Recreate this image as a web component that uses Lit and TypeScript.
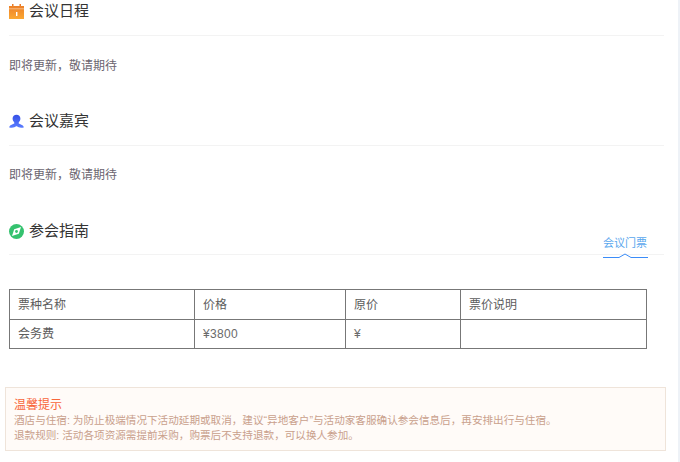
import { LitElement, html, css } from "lit";
import { customElement } from "lit/decorators.js";

@customElement("app-root")
export class AppRoot extends LitElement {
  static styles = css`
    :host {
      display: flex;
      width: 680px;
      height: 462px;
      overflow: hidden;
      background: #fff;
      font-family: "Liberation Sans", "Noto Sans CJK SC", sans-serif;
      color: #333;
      box-sizing: border-box;
    }
    .page { flex: 1; min-width: 0; padding: 0 14px 0 9px; }
    .bar { width: 2px; flex: none; background: #eef2f7; }
    .head {
      display: flex;
      align-items: center;
      gap: 5px;
      height: 20px;
      padding: 1px 0 14px;
      border-bottom: 1px solid #f3f3f3;
      font-size: 15px;
      line-height: 20px;
      color: #333;
    }
    .head svg { width: 15px; height: 15px; flex: none; }
    .soon {
      font-size: 12px;
      line-height: 18px;
      color: #6b6570;
      padding: 21px 0 0;
      height: 65px;
      box-sizing: border-box;
      margin-bottom: 9px;
    }
    .soon.second { padding-top: 20px; }
    .guide { position: relative; }
    .guide .head { padding-bottom: 13px; }
    .tab {
      position: absolute;
      right: 16px;
      top: 15px;
      width: 45px;
      font-size: 11px;
      line-height: 16px;
      color: #5aa7ee;
      text-align: left;
    }
    .tab svg { display: block; width: 45px; height: 6px; margin-top: 2px; }
    table {
      border-collapse: collapse;
      table-layout: fixed;
      width: 637px;
      margin-top: 34px;
      font-size: 12px;
      color: #5c5c5c;
    }
    td {
      border: 1px solid #777;
      padding: 0 8px;
      height: 28px;
      line-height: 18px;
    }
    tr.first td { height: 29px; }
    .price { letter-spacing: 0.3px; color: #6a6a6a; }
    .notice {
      margin: 38px 0 0 -4px;
      width: 661px;
      height: 64px;
      box-sizing: border-box;
      border: 1px solid #efe4da;
      background: #fffbf8;
      padding: 9px 8px;
      font-size: 10.6px;
      line-height: 15px;
      color: #c9a08c;
    }
    .notice .t { color: #f8663a; font-size: 12px; line-height: 16px; }
  `;

  render() {
    return html`<div class="page">
      <div class="head">
        <svg viewBox="0 0 15 15"><defs><linearGradient id="o" x1="0" y1="0" x2="0" y2="1"><stop offset="0" stop-color="#ea7a28"/><stop offset="1" stop-color="#fba832"/></linearGradient></defs>
          <path fill="url(#o)" d="M0 2h3V0h1.500v2h6V0H12v2h3v13H0z"/><rect x="0" y="4.500" width="15" height=".7" fill="#fff" opacity=".6"/><rect x="7" y="8" width="1.400" height="4" fill="#fff"/></svg>
        <span>会议日程</span>
      </div>
      <div class="soon">即将更新，敬请期待</div>
      <div class="head">
        <svg viewBox="0 0 15 15"><defs><linearGradient id="b" x1="0" y1="0" x2="0" y2="1"><stop offset="0" stop-color="#3550e6"/><stop offset="1" stop-color="#5b7dff"/></linearGradient></defs>
          <path fill="url(#b)" d="M7.500 .8c2.200 0 3.900 1.600 3.900 3.800 0 1.700-.8 3-1.700 3.800v1.200c1.300.7 4 1.200 5.300 3.600-1.500.7-3.900.7-5.300.1-.8-.4-1.500-1.100-2.200-1.100s-1.400.7-2.200 1.100c-1.400.6-3.800.6-5.300-.1C1.300 10.800 4 10.300 5.300 9.600V8.400C4.400 7.600 3.600 6.300 3.600 4.600 3.600 2.400 5.300 .8 7.500 .8z"/></svg>
        <span>会议嘉宾</span>
      </div>
      <div class="soon second">即将更新，敬请期待</div>
      <div class="guide">
        <div class="head">
          <svg viewBox="0 0 15 15"><circle cx="7.500" cy="7.500" r="7.500" fill="#35c26f"/><path fill="#fff" d="M12 3 9.800 9.800 3 12 5.200 5.200z"/><circle cx="7.500" cy="7.500" r="1.400" fill="#35c26f"/></svg>
          <span>参会指南</span>
        </div>
        <div class="tab">会议门票
          <svg viewBox="0 0 45 6"><path d="M0 4.500h16l6-3.500 6 3.500h17" fill="none" stroke="#3b8cf8" stroke-width="1"/></svg>
        </div>
        <table>
          <colgroup><col style="width:185px"/><col style="width:151px"/><col style="width:115px"/><col style="width:186px"/></colgroup>
          <tr class="first"><td>票种名称</td><td>价格</td><td>原价</td><td>票价说明</td></tr>
          <tr><td>会务费</td><td class="price">¥3800</td><td class="price">¥</td><td></td></tr>
        </table>
      </div>
      <div class="notice">
        <div class="t">温馨提示</div>
        <div>酒店与住宿: 为防止极端情况下活动延期或取消，建议“异地客户”与活动家客服确认参会信息后，再安排出行与住宿。</div>
        <div>退款规则: 活动各项资源需提前采购，购票后不支持退款，可以换人参加。</div>
      </div>
    </div><div class="bar"></div>`;
  }
}
